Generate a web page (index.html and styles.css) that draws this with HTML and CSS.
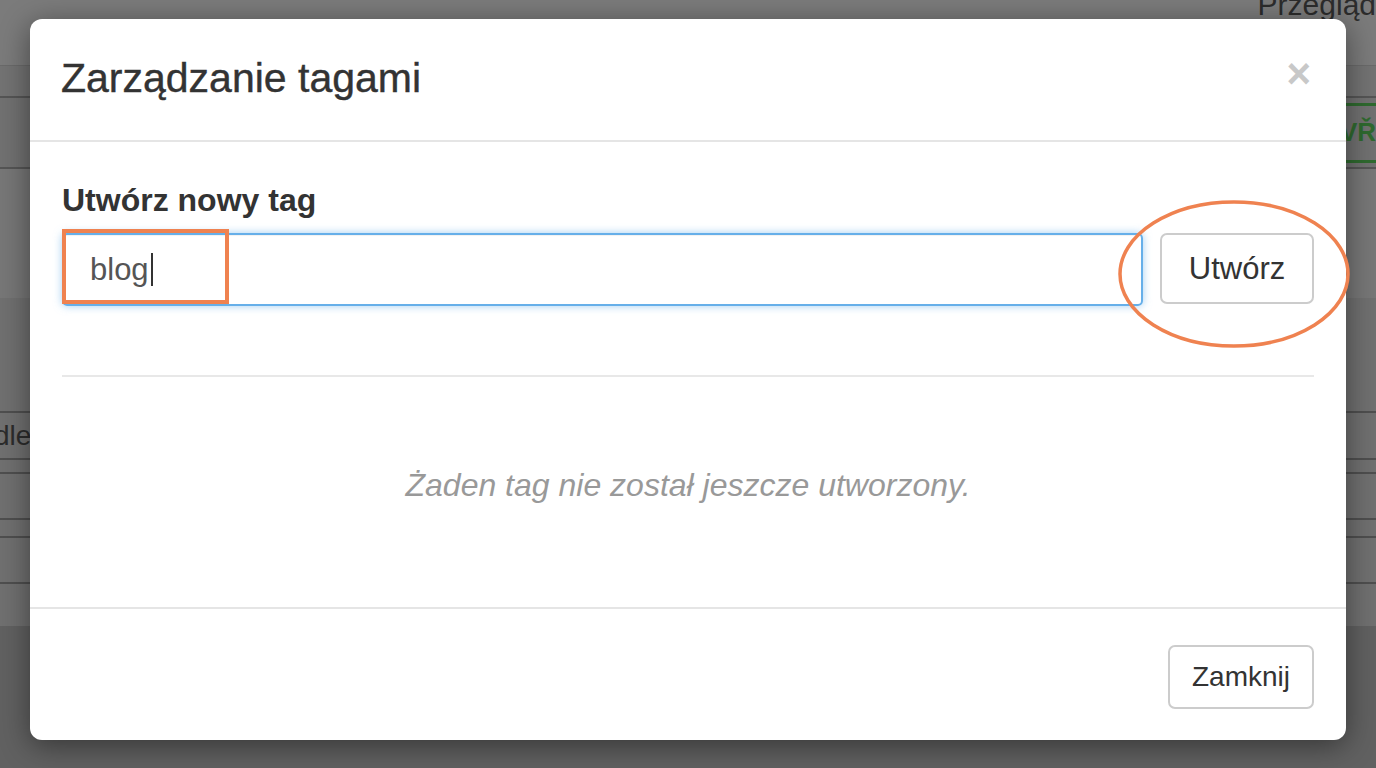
FILE: index.html
```html
<!DOCTYPE html>
<html lang="pl">
<head>
<meta charset="utf-8">
<title>Zarządzanie tagami</title>
<link rel="stylesheet" href="styles.css">
</head>
<body>
<div class="page">
  <div class="bg-top"><span class="bg-title">Przegląd</span></div>
  <div class="bg-nav"></div>
  <div class="bg-bar"><span class="bg-green">VŘ</span></div>
  <div class="bg-sec"></div>
  <div class="bg-rows">
    <div class="bg-row r1"></div>
    <div class="bg-row r2"><span class="bg-box">dle</span></div>
    <div class="bg-row r3"></div>
    <div class="bg-row r4"></div>
    <div class="bg-row r5"></div>
    <div class="bg-row r6"></div>
  </div>
  <div class="bg-bottom"></div>
</div>

<div class="modal">
  <div class="modal-header">
    <h4 class="modal-title">Zarządzanie tagami</h4>
    <span class="close">×</span>
  </div>
  <div class="modal-body">
    <label class="label">Utwórz nowy tag</label>
    <div class="input-row">
      <div class="input"><span class="value">blog</span><span class="caret"></span></div>
      <button class="btn btn-create">Utwórz</button>
    </div>
    <hr class="sep">
    <p class="empty">Żaden tag nie został jeszcze utworzony.</p>
  </div>
  <div class="modal-footer">
    <button class="btn btn-close">Zamknij</button>
  </div>
</div>

<svg class="annot" width="1376" height="768" viewBox="0 0 1376 768">
  <rect x="64" y="231" width="163" height="71" fill="none" stroke="#ef8250" stroke-width="4"/>
  <ellipse cx="1234" cy="274" rx="114" ry="72" fill="none" stroke="#ef8250" stroke-width="3.5"/>
</svg>
</body>
</html>
```

FILE: styles.css
```css
html, body {
  margin: 0;
  padding: 0;
}
body {
  width: 1376px;
  height: 768px;
  overflow: hidden;
  position: relative;
  background: #6d6d6d;
  font-family: "Liberation Sans", Arial, Helvetica, sans-serif;
}

/* dimmed background page */
.page {
  display: flex;
  flex-direction: column;
  height: 768px;
}
.bg-top {
  height: 65px;
  background: #7b7b7b;
  border-bottom: 1px solid #6a6a6a;
  display: flex;
  justify-content: flex-end;
  align-items: flex-start;
  overflow: hidden;
}
.bg-title {
  font-size: 30px;
  color: #2c2c2c;
  margin-top: -12px;
  margin-right: 0;
}
.bg-nav {
  height: 30px;
  background: #737373;
  border-bottom: 2px solid #555;
}
.bg-bar {
  height: 69px;
  background: #717171;
  border-bottom: 2px solid #555;
  display: flex;
  justify-content: flex-end;
  align-items: center;
}
.bg-green {
  height: 60px;
  box-sizing: border-box;
  border-top: 3px solid #2f6a2f;
  border-bottom: 3px solid #2f6a2f;
  display: flex;
  align-items: center;
  justify-content: flex-end;
  width: 30px;
  overflow: hidden;
  color: #2f6a2f;
  font-weight: bold;
  font-size: 26px;
  white-space: nowrap;
}
.bg-sec {
  height: 129px;
  background: #777;
}
.bg-rows {
  height: 328px;
  background: #707070;
  display: flex;
  flex-direction: column;
}
.bg-row { box-sizing: border-box; }
.r1 { height: 115px; border-bottom: 2px solid #4f4f4f; }
.r2 { height: 47px; border-bottom: 2px solid #4f4f4f; display: flex; align-items: center; }
.r3 { height: 14px; border-bottom: 2px solid #4f4f4f; }
.r4 { height: 46px; border-bottom: 2px solid #4f4f4f; }
.r5 { height: 18px; border-bottom: 2px solid #4f4f4f; }
.r6 { height: 46px; border-bottom: 2px solid #4f4f4f; }
.bg-box {
  font-size: 28px;
  color: #2c2c2c;
  margin-left: -6px;
}
.bg-bottom {
  flex: 1;
  background: #616161;
}

/* modal */
.modal {
  position: absolute;
  left: 30px;
  top: 19px;
  width: 1316px;
  height: 721px;
  background: #fff;
  border-radius: 12px;
  box-shadow: 0 6px 30px rgba(0, 0, 0, 0.45);
  display: flex;
  flex-direction: column;
  box-sizing: border-box;
}
.modal-header {
  height: 123px;
  box-sizing: border-box;
  border-bottom: 2px solid #e5e5e5;
  display: flex;
  align-items: center;
  justify-content: space-between;
  padding: 0 35px 0 31px;
}
.modal-title {
  margin: 0;
  font-size: 41px;
  font-weight: normal;
  color: #333;
  line-height: 1.1;
  margin-top: -2px;
  -webkit-text-stroke: 0.4px #333;
}
.close {
  font-size: 42px;
  font-weight: bold;
  color: #c8c8c8;
  line-height: 1;
  margin-top: -12px;
}
.modal-body {
  flex: 1;
  padding: 40px 32px 0 32px;
  display: flex;
  flex-direction: column;
}
.label {
  font-size: 32px;
  font-weight: bold;
  color: #333;
  line-height: 36px;
  margin-bottom: 15px;
}
.input-row {
  display: flex;
  align-items: flex-start;
  gap: 17px;
}
.input {
  flex: 1;
  height: 73px;
  box-sizing: border-box;
  border: 2px solid #66afe9;
  border-radius: 5px;
  box-shadow: 0 0 9px rgba(102, 175, 233, 0.6), inset 0 1px 1px rgba(0,0,0,.06);
  display: flex;
  align-items: center;
  padding-left: 26px;
  font-size: 31px;
  color: #555;
}
.caret {
  width: 2px;
  height: 33px;
  background: #333;
  margin-left: 2px;
}
.btn {
  font-family: "Liberation Sans", Arial, Helvetica, sans-serif;
  background: #fff;
  border: 2px solid #ccc;
  border-radius: 7px;
  color: #333;
  padding: 0;
  box-sizing: border-box;
}
.btn-create {
  width: 154px;
  height: 71px;
  font-size: 31px;
}
.sep {
  margin: 69px 0 0 0;
  border: 0;
  border-top: 2px solid #e8e8e8;
  height: 0;
}
.empty {
  margin: 90px 0 0 0;
  text-align: center;
  font-style: italic;
  font-size: 32px;
  line-height: 36px;
  color: #999;
}
.modal-footer {
  border-top: 2px solid #e5e5e5;
  padding: 36px 32px 31px 32px;
  display: flex;
  justify-content: flex-end;
}
.btn-close {
  width: 146px;
  height: 64px;
  font-size: 28px;
}

/* annotations */
.annot {
  position: absolute;
  left: 0;
  top: 0;
  pointer-events: none;
}
```
